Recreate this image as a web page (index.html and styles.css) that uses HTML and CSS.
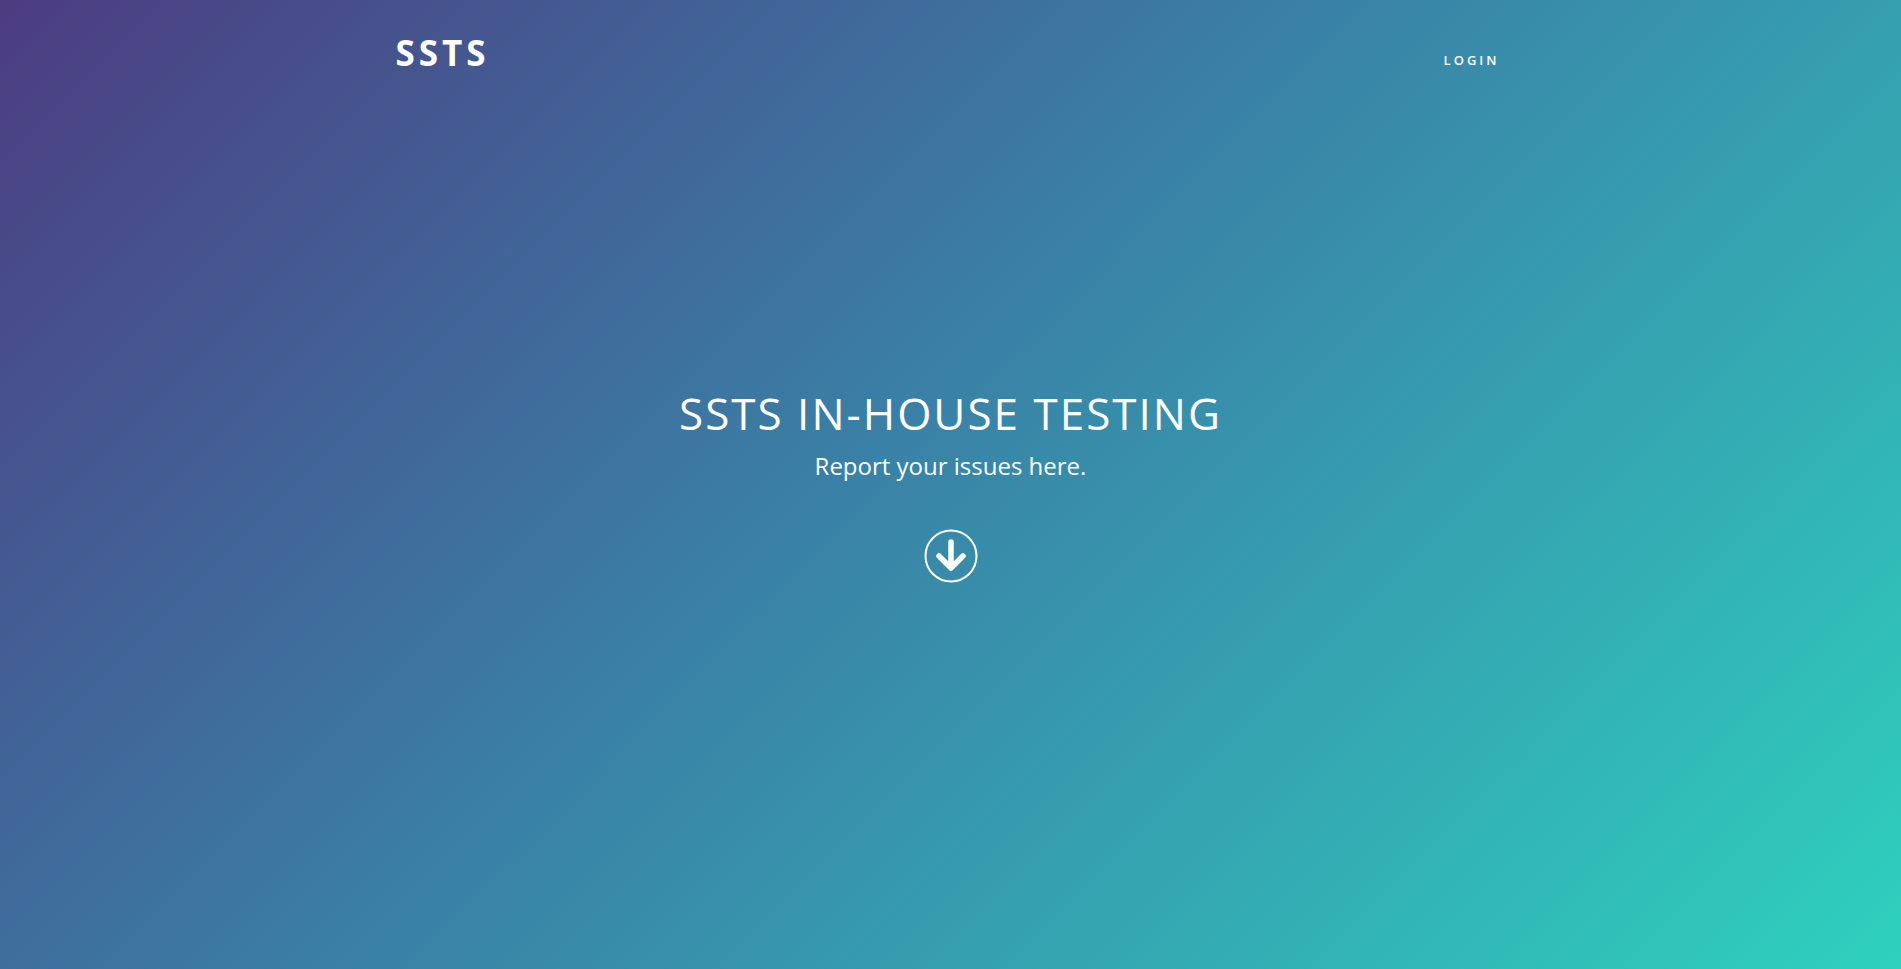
FILE: index.html
```html
<!DOCTYPE html>
<html lang="en">
<head>
<meta charset="utf-8">
<title>SSTS</title>
<link rel="stylesheet" href="styles.css">
</head>
<body>
<header class="masthead">
  <nav class="navbar">
    <a class="brand" href="#">SSTS</a>
    <a class="nav-link" href="#">LOGIN</a>
  </nav>
  <div class="hero">
    <h1 class="hero-title">SSTS IN-HOUSE TESTING</h1>
    <h2 class="hero-sub">Report your issues here.</h2>
    <a class="scroll-btn" href="#">
      <svg width="54" height="54" viewBox="0 0 54 54" aria-hidden="true">
        <circle cx="27" cy="27" r="25.5" fill="none" stroke="#fff" stroke-width="2"/>
        <path d="M27 13 V38 M15 27 L27 39 L39 27" fill="none" stroke="#fff" stroke-width="5.5" stroke-linecap="round" stroke-linejoin="round"/>
      </svg>
    </a>
  </div>
  <div class="bottom-space"></div>
</header>
</body>
</html>
```
FILE: styles.css
```css
html, body {
  margin: 0;
  padding: 0;
}
body {
  font-family: "Open Sans", "Liberation Sans", sans-serif;
  color: #fff;
}
.masthead {
  min-height: 100vh;
  box-sizing: border-box;
  display: flex;
  flex-direction: column;
  background: linear-gradient(135deg, #4c3c80 0%, #3a7fa6 45%, #2ed1be 100%);
}
.navbar {
  width: 1110px;
  margin: 0 auto;
  padding-top: 29px;
  display: flex;
  justify-content: space-between;
  align-items: flex-start;
  height: 80px;
  box-sizing: border-box;
}
.brand {
  color: #fff;
  text-decoration: none;
  font-weight: 700;
  font-size: 35px;
  letter-spacing: 4px;
  line-height: normal;
}
.nav-link {
  color: #fff;
  text-decoration: none;
  font-size: 13px;
  font-weight: 600;
  letter-spacing: 3px;
  margin-top: 22px;
  margin-right: 6px;
}
.hero {
  flex: 1;
  display: flex;
  flex-direction: column;
  align-items: center;
  justify-content: center;
  text-align: center;
}
.hero-title {
  margin: 0;
  font-weight: 400;
  font-size: 44px;
  line-height: 52px;
  letter-spacing: 2px;
}
.hero-sub {
  margin: 11px 0 0;
  font-weight: 400;
  font-size: 24px;
  line-height: 32px;
}
.scroll-btn {
  display: block;
  margin-top: 47px;
  width: 54px;
  height: 54px;
}
.scroll-btn svg {
  display: block;
}
.bottom-space {
  height: 80px;
}
```
